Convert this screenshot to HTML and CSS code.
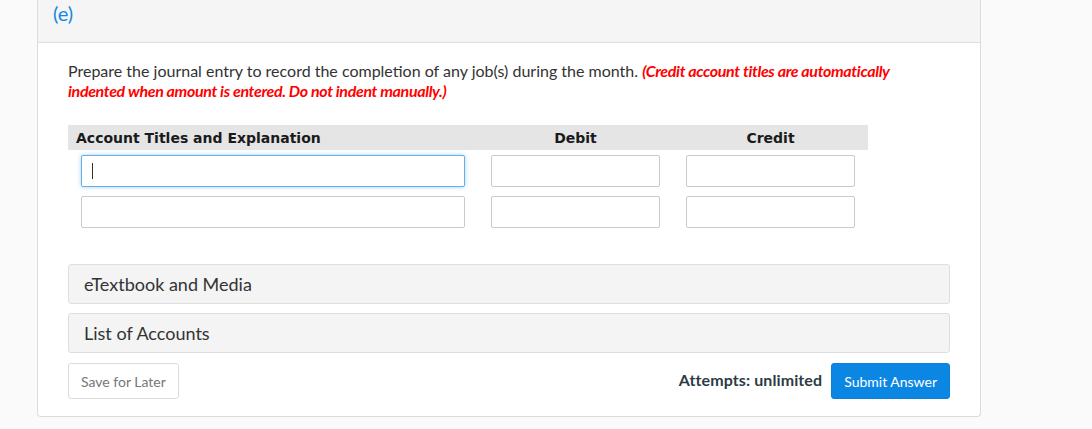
FILE: index.html
```html
<!DOCTYPE html>
<html lang="en">
<head>
<meta charset="utf-8">
<title>Journal entry</title>
<link rel="stylesheet" href="styles.css">
</head>
<body>
<div class="page">
  <section class="card">
    <header class="card-head"><span class="part">(e)</span></header>
    <div class="card-body">
      <p class="prompt">Prepare the journal entry to record the completion of any job(s) during the month. <em class="warn">(Credit account titles are automatically indented when amount is entered. Do not indent manually.)</em></p>
      <table class="journal">
        <thead>
          <tr>
            <th class="col-acct">Account Titles and Explanation</th>
            <th class="col-amt">Debit</th>
            <th class="col-amt">Credit</th>
          </tr>
        </thead>
        <tbody>
          <tr>
            <td><div class="field focused"><input type="text" class="inp"></div></td>
            <td><div class="field"><input type="text" class="inp"></div></td>
            <td><div class="field"><input type="text" class="inp"></div></td>
          </tr>
          <tr>
            <td><div class="field"><input type="text" class="inp"></div></td>
            <td><div class="field"><input type="text" class="inp"></div></td>
            <td><div class="field"><input type="text" class="inp"></div></td>
          </tr>
        </tbody>
      </table>
      <div class="panels">
        <div class="panel">eTextbook and Media</div>
        <div class="panel">List of Accounts</div>
      </div>
      <div class="actions">
        <button class="btn btn-save" type="button">Save for Later</button>
        <div class="submit-group">
          <span class="attempts">Attempts: unlimited</span>
          <button class="btn btn-submit" type="button">Submit Answer</button>
        </div>
      </div>
    </div>
  </section>
</div>
</body>
</html>
```
FILE: styles.css
```css
html, body {
  margin: 0;
  padding: 0;
  background: #fafafa;
  font-family: Lato, "Open Sans", sans-serif;
  color: #333;
}

.page {
  padding-left: 37px;
  width: 944px;
}

.card {
  background: #fff;
  border: 1px solid #dcdcdc;
  border-top: 0;
  border-radius: 0 0 4px 4px;
}

.card-head {
  height: 43px;
  background: #f5f5f5;
  border-bottom: 1px solid #dedede;
  padding-left: 15px;
  box-sizing: border-box;
}

.part {
  display: inline-block;
  color: #1188e3;
  font-size: 20px;
  line-height: 26px;
}

.card-body {
  padding: 18px 30px 17px 30px;
}

.prompt {
  margin: 0;
  font-size: 16px;
  line-height: 20px;
  color: #333;
  width: 840px;
}

.warn {
  color: #f00;
  font-weight: bold;
  font-style: italic;
  letter-spacing: -0.35px;
}

.journal {
  margin-top: 24px;
  border-collapse: collapse;
  table-layout: fixed;
  width: 800px;
}

.journal th {
  background: #e5e5e5;
  height: 25px;
  box-sizing: border-box;
  padding: 1px 8px 0 8px;
  font-family: "DejaVu Sans", Verdana, sans-serif;
  font-size: 14px;
  font-weight: bold;
  color: #1a1a1a;
}

.col-acct {
  text-align: left;
  width: 410px;
}

.col-amt {
  text-align: center;
  width: 195px;
}

.journal td {
  padding: 5px 13px 4px 13px;
  height: 41px;
  box-sizing: border-box;
}

.field {
  position: relative;
  height: 32px;
}

.inp {
  display: block;
  width: 100%;
  height: 32px;
  margin: 0;
  box-sizing: border-box;
  border: 1px solid #cacaca;
  border-radius: 2px;
  background: #fff;
  padding: 4px 10px;
  font-size: 14px;
  font-family: Lato, sans-serif;
  outline: none;
}

.focused .inp {
  border-color: #66afe9;
  box-shadow: 0 0 4px rgba(102, 175, 233, 0.6);
}

.focused::after {
  content: "";
  position: absolute;
  left: 11px;
  top: 8px;
  width: 1px;
  height: 16px;
  background: #333;
}

.panels {
  margin-top: 32px;
  display: flex;
  flex-direction: column;
  gap: 9px;
}

.panel {
  height: 40px;
  box-sizing: border-box;
  background: #f4f4f4;
  border: 1px solid #dedede;
  border-radius: 3px;
  padding: 0 15px;
  font-size: 18px;
  line-height: 38px;
  color: #333;
}

.actions {
  margin-top: 10px;
  display: flex;
  justify-content: space-between;
  align-items: flex-start;
}

.btn {
  height: 36px;
  box-sizing: border-box;
  border-radius: 3px;
  padding: 0 12px;
  font-family: Lato, sans-serif;
  font-size: 14px;
  white-space: nowrap;
  cursor: pointer;
}

.btn-save {
  background: #fff;
  border: 1px solid #dcdcdc;
  color: #777;
}

.submit-group {
  display: flex;
  align-items: center;
  gap: 9px;
}

.attempts {
  font-size: 16px;
  font-weight: bold;
  color: #2d3b45;
  letter-spacing: 0.1px;
  margin-top: -4px;
}

.btn-submit {
  background: #0b87e3;
  border: 1px solid #0a80d8;
  color: #fff;
}
```
